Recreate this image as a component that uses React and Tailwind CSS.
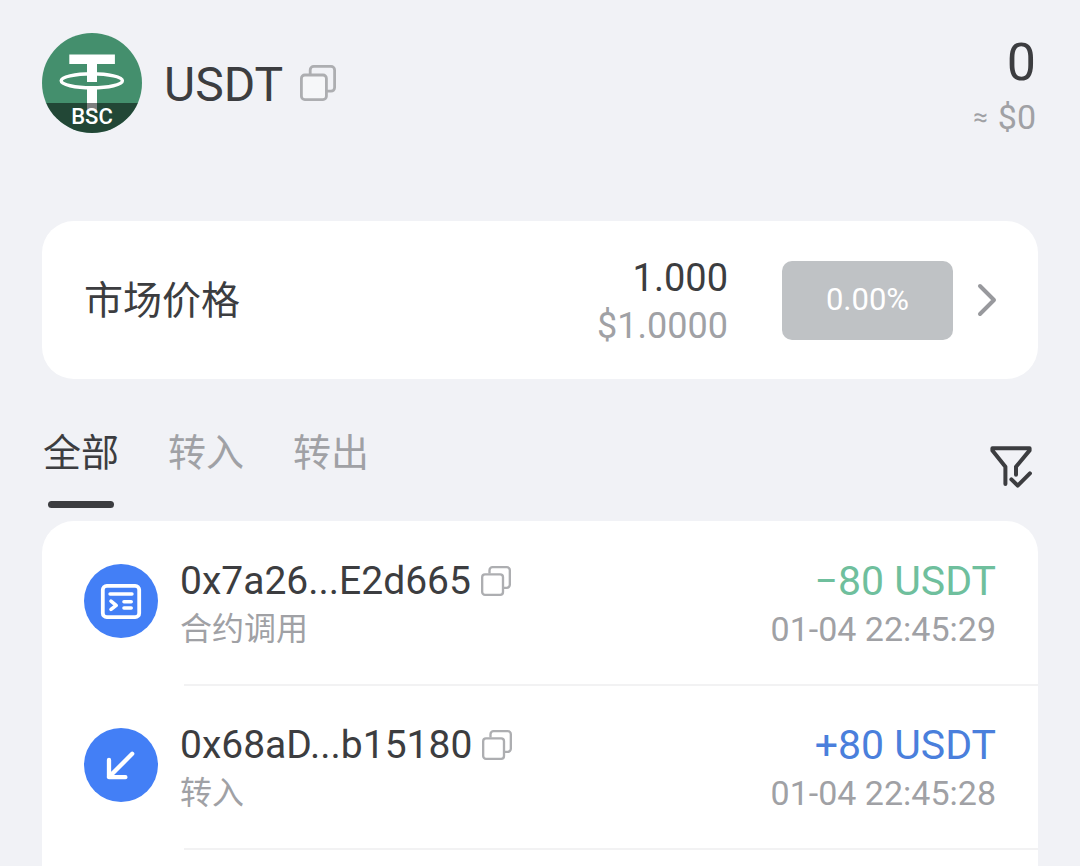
import React, { useState } from 'react';

const tabs = ['全部', '转入', '转出'];

const transactions = [
  { id: 1, type: 'call', address: '0x7a26...E2d665', label: '合约调用', amount: '−80 USDT', color: 'text-[#6fbf9d]', time: '01-04 22:45:29' },
  { id: 2, type: 'in', address: '0x68aD...b15180', label: '转入', amount: '+80 USDT', color: 'text-[#4a7fdc]', time: '01-04 22:45:28' },
];

function CopyIcon({ className }) {
  return (
    <svg viewBox="0 0 36 36" fill="none" stroke="#adaeb1" strokeWidth="2.8" className={className}>
      <path d="M10.2 9V5a3.6 3.6 0 0 1 3.6-3.6h17.2A3.6 3.6 0 0 1 34.6 5v17.6a3.6 3.6 0 0 1-3.6 3.6H27" />
      <rect x="1.4" y="10" width="25" height="24.6" rx="3.4" fill="#fff" fillOpacity="0.4" />
    </svg>
  );
}

function TokenLogo() {
  return (
    <div className="relative size-[100px] shrink-0 rounded-full overflow-hidden bg-[#448f6d]">
      <svg viewBox="0 0 100 100" fill="#fff" className="size-full">
        <path d="M27.3 21.5h45.6V31H55v18H45V31H27.3z" />
        <path d="M45 55.5h10V78H45z" />
        <ellipse cx="49.8" cy="47.8" rx="30.6" ry="7" fill="none" stroke="#fff" strokeWidth="3.4" />
      </svg>
      <div className="absolute inset-x-0 bottom-0 h-[30px] bg-black/50 text-white font-medium text-[22px] leading-[28px] text-center">
        BSC
      </div>
    </div>
  );
}

function TxIcon({ type }) {
  return (
    <svg viewBox="0 0 74 74" fill="none" stroke="#fff" strokeLinecap="round" className="size-[74px] mt-2 shrink-0 rounded-full bg-[#437ff6]">
      {type === 'call' ? (
        <>
          <rect x="18.8" y="21.8" width="36.4" height="31.4" rx="4" strokeWidth="3.8" />
          <path d="M26 30h22" strokeWidth="3.4" />
          <path d="M27 37.2l5.2 4.1-5.2 4.1M40 37.8h7.2M40 44h7.2" strokeWidth="3.6" strokeLinejoin="round" />
        </>
      ) : (
        <path d="M48.2 25.8L25 49M25 32v17.2h16.4" strokeWidth="4.3" strokeLinejoin="round" />
      )}
    </svg>
  );
}

function App() {
  const [activeTab, setActiveTab] = useState('全部');

  return (
    <div className="min-h-screen flex flex-col bg-[#f1f2f6] px-[42px] text-[#3c3d40] font-[Roboto,'Noto_Sans_CJK_SC',sans-serif]">

      <header className="flex justify-between pt-[33px]">
        <div className="flex items-center h-[100px]">
          <TokenLogo />
          <h1 className="ml-[22px] pt-1 text-[48px] leading-[56px]">USDT</h1>
          <button type="button" aria-label="复制" className="ml-[17px]">
            <CopyIcon className="size-9" />
          </button>
        </div>
        <div className="pr-[2px] text-right">
          <div className="text-[52px] leading-[60px]">0</div>
          <div className="flex items-center justify-end gap-[10px] text-[34px] leading-[48px] text-[#a0a1a5]">
            <span className="text-[26px]">≈</span>
            <span>$0</span>
          </div>
        </div>
      </header>

      <section className="mt-20 h-[158px] flex items-center rounded-[32px] bg-white pl-[42px] pr-[41px]">
        <h2 className="pt-[2px] text-[39px] leading-[48px]">市场价格</h2>
        <div className="ml-auto pt-1 text-right">
          <div className="text-[38px] leading-[48px]">1.000</div>
          <div className="text-[36px] leading-[48px] text-[#a0a1a5]">$1.0000</div>
        </div>
        <button type="button" className="ml-[54px] w-[171px] h-[79px] rounded-[10px] bg-[#bfc2c5] text-white text-[31px]">
          0.00%
        </button>
        <button type="button" aria-label="查看行情" className="ml-6">
          <svg viewBox="0 0 20 34" fill="none" stroke="#98999d" strokeWidth="4" strokeLinecap="round" strokeLinejoin="round" className="w-5 h-[34px]">
            <path d="M3 3l14 14L3 31" />
          </svg>
        </button>
      </section>

      <nav className="mt-[50px] mb-[13px] flex items-start gap-[49px] pl-px">
        {tabs.map(tab => (
          <button
            key={tab} type="button" onClick={() => setActiveTab(tab)}
            className={`flex flex-col items-center text-[38px] leading-[48px] ${tab === activeTab ? '' : 'text-[#a0a1a5]'}`}
          >
            {tab}
            <span className={`mt-6 w-[66px] h-[7px] rounded-full ${tab === activeTab ? 'bg-[#3c3d40]' : ''}`} />
          </button>
        ))}
        <button type="button" aria-label="筛选" className="ml-auto mt-[17px] mr-[6px]">
          <svg viewBox="0 0 42 42" fill="none" stroke="#3c3d40" strokeWidth="4" strokeLinecap="round" strokeLinejoin="round" className="size-[42px]">
            <path d="M15.4 38V20.8L2.4 4.4V2.3h37.2v2.1L26 20.8v8" />
            <path d="M21.4 33.4l6.3 6.2 12.2-12.2" />
          </svg>
        </button>
      </nav>

      <ul className="flex-1 rounded-t-[32px] bg-white pt-px">
        {transactions.map(tx => (
          <li key={tx.id}>
            <div className="flex items-start h-[162px] pt-[34px] px-[42px]">
              <TxIcon type={tx.type} />
              <div className="ml-[22px]">
                <div className="flex items-center text-[39px] leading-[50px]">
                  {tx.address}
                  <button type="button" aria-label="复制" className="ml-[10px]">
                    <CopyIcon className="size-[30px]" />
                  </button>
                </div>
                <div className="text-[32px] leading-[46px] text-[#a0a1a5]">{tx.label}</div>
              </div>
              <div className="ml-auto text-right">
                <div className={`text-[41px] leading-[50px] ${tx.color}`}>{tx.amount}</div>
                <div className="text-[34px] leading-[46px] text-[#a0a1a5]">{tx.time}</div>
              </div>
            </div>
            <div className="ml-[142px] h-[2px] bg-[#f2f2f3]" />
          </li>
        ))}
      </ul>
    </div>
  );
}

export default App;
